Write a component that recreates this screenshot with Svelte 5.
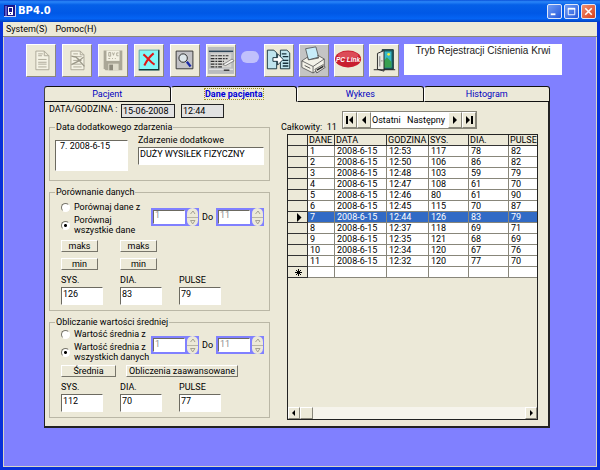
<script lang="ts">
  type Reading = { no: number; time: string; sys: number; dia: number; pulse: number };

  const tabs = ['Pacjent', 'Dane pacjenta', 'Wykres', 'Histogram'];
  const date = '2008-6-15';

  const readings: Reading[] = [
    { no: 1, time: '12:53', sys: 117, dia: 78, pulse: 82 },
    { no: 2, time: '12:50', sys: 106, dia: 86, pulse: 82 },
    { no: 3, time: '12:48', sys: 103, dia: 59, pulse: 79 },
    { no: 4, time: '12:47', sys: 108, dia: 61, pulse: 70 },
    { no: 5, time: '12:46', sys: 80, dia: 61, pulse: 90 },
    { no: 6, time: '12:45', sys: 115, dia: 70, pulse: 87 },
    { no: 7, time: '12:44', sys: 126, dia: 83, pulse: 79 },
    { no: 8, time: '12:37', sys: 118, dia: 69, pulse: 71 },
    { no: 9, time: '12:35', sys: 121, dia: 68, pulse: 69 },
    { no: 10, time: '12:34', sys: 120, dia: 67, pulse: 76 },
    { no: 11, time: '12:32', sys: 120, dia: 77, pulse: 70 }
  ];

  let activeTab = $state('Dane pacjenta');
  let selected = $state(7);
  let compareMode = $state('all');
  let averageMode = $state('all');

  function step(by: number) {
    selected = Math.min(readings.length, Math.max(1, selected + by));
  }
</script>

{#snippet spinner(label: string, value: string)}
  <span class="spinner">
    <input type="text" aria-label={label} {value} disabled />
    <span class="arrows">
      <button aria-label="Więcej" disabled><svg viewBox="0 0 11 9"><path d="M3.500 6 6 3l2 3" /></svg></button>
      <button aria-label="Mniej" disabled><svg viewBox="0 0 11 9"><path d="M3.500 2.500h4.500L5.700 6z" /></svg></button>
    </span>
  </span>
{/snippet}

{#snippet results(sys: string, dia: string, pulse: string)}
  <div class="results">
    <label>SYS.<input type="text" value={sys} /></label>
    <label>DIA.<input type="text" value={dia} /></label>
    <label>PULSE<input type="text" value={pulse} /></label>
  </div>
{/snippet}

<div class="window">
  <header class="titlebar">
    <svg class="logo" viewBox="0 0 12 12">
      <rect width="12" height="12" fill="#16168c" />
      <rect x="1" y="1" width="2" height="10" fill="#5a5ac8" />
      <rect x="4" y="2" width="5" height="8" fill="#fff" />
      <path d="M5 3h3v4H5zM6 8h1v1H6z" fill="#16168c" />
      <path d="M11.500 0v12M0 11.500h12" stroke="#c8d0f0" />
    </svg>
    <h1>BP4.0</h1>
    <button class="ctl" aria-label="Minimalizuj"><svg viewBox="0 0 14 14"><path d="M3 10h5" stroke-width="2" /></svg></button>
    <button class="ctl" aria-label="Maksymalizuj"><svg viewBox="0 0 14 14"><path d="M3.500 4v6.500h7V4" /><path d="M3 4h8" stroke-width="2" /></svg></button>
    <button class="ctl close" aria-label="Zamknij"><svg viewBox="0 0 14 14"><path d="m3.500 3.500 7 7m0-7-7 7" stroke-width="1.700" /></svg></button>
  </header>

  <nav class="menu">
    <button>System(S)</button>
    <button>Pomoc(H)</button>
  </nav>

  <main>
    <div class="toolbar">
      <div class="tools">
        <button class="tool" aria-label="Raport" disabled>
          <svg viewBox="0 0 30 33" fill="none" stroke="#aaa797">
            <path d="M9.500 6.500h9l5 5v15h-14zM18.500 6.500v5h5" fill="#f4f2e4" />
            <path d="M12 9.500h5M12 11.500h4M12 15.500h9M12 18.500h9M12 20.500h9M12 23.500h9" />
          </svg>
        </button>
        <button class="tool" aria-label="Usuń raport" disabled>
          <svg viewBox="0 0 30 33" fill="none" stroke="#aaa797">
            <path d="M8.500 6.500h10l4 4v16h-14zM18.500 6.500v4h4" fill="#f4f2e4" />
            <path d="M11 9.500h5M11 12.500h9M11 16.500h9M11 20.500h9M11 23.500h9" />
            <path d="m9 12 5 1 9 10M22 13l-5 4-8 4M14 13l5 4" stroke="#999686" stroke-width="1.300" />
          </svg>
        </button>
        <button class="tool" aria-label="Zapisz" disabled>
          <svg viewBox="0 0 30 33">
            <path d="M5 6h20v21H7l-2-2z" fill="#aaa797" />
            <path d="M8 6h14v11H8z" fill="#f4f2e4" />
            <path d="M10.500 8v4h2V8zM14.500 8l1 3 1-3M21 8.500h-2v3h2M10 14.500h2M14 14.500h1M17 14.500h1" fill="none" stroke="#aaa797" />
            <path d="M10 20h11v7H10z" fill="#dedbcb" />
            <path d="M11 21h4v6h-4z" fill="#8c897b" />
          </svg>
        </button>
        <button class="tool" aria-label="Usuń">
          <svg viewBox="0 0 30 33">
            <path d="M4 5h21v22H4z" fill="#80f8f8" />
            <path d="M4 26.500h21.500V5" fill="none" stroke="#103838" stroke-width="1.500" />
            <path d="M4.500 26V5.500H25" fill="none" stroke="#7c9a98" />
            <path d="M9 10c4 3 7 8 12 11M20 9c-4 3-7 7-10 13" fill="none" stroke="#e01818" stroke-width="2.200" />
          </svg>
        </button>
        <button class="tool" aria-label="Szukaj">
          <svg viewBox="0 0 30 33">
            <path d="M5.500 6.500h18v19h-18z" fill="#c2c2c6" stroke="#333" />
            <circle cx="13" cy="14" r="4.500" fill="#dde6ea" stroke="#222" />
            <path d="m17 18 4 5" stroke="#1a2aa8" stroke-width="2.500" />
          </svg>
        </button>
        <button class="tool" aria-label="Notatki">
          <svg viewBox="0 0 30 33">
            <path d="M1 2h28v29H1z" fill="#b9bcbe" />
            <path d="M2 6h26v1.500H2z" fill="#2d4658" />
            <path d="M4 9h22v15H4z" fill="#d6d6d2" />
            <path d="M4 11.500h19M4 14.500h18M4 17.500h14M4 20.500h14M4 23.500h12" stroke="#2c2c2c" stroke-width="1.300" stroke-dasharray="4 1 2 1" />
            <path d="m17 21 10-6 2 2-9 5z" fill="#f6f6f4" stroke="#444" stroke-width=".6" />
            <path d="M2 26h26" stroke="#eee" /><path d="M18 27h6" stroke="#333" stroke-width="1.500" />
          </svg>
        </button>
      </div>
      <span class="pill"></span>
      <button class="tool" aria-label="Przenieś dane">
        <svg viewBox="0 0 30 33" stroke="#16303c">
          <path d="M2.500 5.500h7l3 3v17h-10z" fill="#bfe4ee" />
          <path d="M16.500 5.500h7l3 3v17h-10z" fill="#bfe4ee" />
          <path d="M18 9.500h5M19 12.500h6M19 16.500h6M19 19.500h6M19 22.500h6" stroke-width="1.500" />
          <path d="M8.500 13.500h5v-4l6 6-6 6v-4h-5z" fill="#fff" />
        </svg>
      </button>
      <button class="tool grey" aria-label="Drukuj">
        <svg viewBox="0 0 30 33" stroke="#444" stroke-width=".8">
          <path d="m6 4 11-2 3 11-11 3z" fill="#c8ecf8" />
          <path d="m2 17 6-4 1 3 11-2-1-3 7 4v7l-12 8-12-6z" fill="#f4f2e8" />
          <path d="m2 17 12 6 12-8M14 23v7" fill="none" />
          <path d="m16 26 9-5 2 3-9 6z" fill="#e4e2d8" /><path d="m18 27 7-4" stroke="#222" stroke-width="1.500" />
          <path d="m5 22 6 3" stroke="#222" />
        </svg>
      </button>
      <button class="tool" aria-label="PC Link">
        <svg viewBox="0 0 30 33">
          <ellipse cx="14" cy="15" rx="14" ry="9" fill="#c81e30" />
          <ellipse cx="14" cy="11" rx="11" ry="4" fill="#dc4c58" />
          <text x="14" y="18" text-anchor="middle" font-size="7" font-weight="700" font-style="italic" fill="#fff">PC Link</text>
        </svg>
      </button>
      <button class="tool" aria-label="Wyjście">
        <svg viewBox="0 0 30 33">
          <path d="M13 5h12v21H13z" fill="#1f5e64" stroke="#102c30" />
          <path d="M15 7h8v17h-8z" fill="#34b8c8" />
          <path d="m15 17 3-4 5 5v6h-8z" fill="#38a050" />
          <circle cx="20" cy="10" r="1.500" fill="#f4ec40" />
          <path d="m8 9 7-3v22l-7-2z" fill="#e8e8e0" stroke="#222" />
          <path d="M4 26.500h23" stroke="#222" /><path d="M10.500 12v11M12 17h1.500" stroke="#777" />
        </svg>
      </button>
      <div class="mode">Tryb Rejestracji Ciśnienia Krwi</div>
    </div>

    <section class="panel">
      <div class="tabs" role="tablist">
        {#each tabs as tab}
          <button role="tab" class="tab" class:active={tab === activeTab} aria-selected={tab === activeTab} onclick={() => (activeTab = tab)}>
            <span>{tab}</span>
          </button>
        {/each}
      </div>

      <div class="body">
        <div class="left">
          <div class="stamp">
            <label for="stamp-date">DATA/GODZINA :</label>
            <input id="stamp-date" class="date" type="text" value="15-06-2008" readonly />
            <input class="hour" type="text" aria-label="Godzina" value="12:44" readonly />
          </div>

          <fieldset class="event">
            <legend>Data dodatkowego zdarzenia</legend>
            <select size="2" aria-label="Data dodatkowego zdarzenia">
              <option>7. 2008-6-15</option>
            </select>
            <label>Zdarzenie dodatkowe<input type="text" value="DUŻY WYSIŁEK FIZYCZNY" /></label>
          </fieldset>

          <fieldset class="compare">
            <legend>Porównanie danych</legend>
            <div class="range">
              <div class="radios">
                <label><input type="radio" value="range" bind:group={compareMode} />Porównaj dane z</label>
                <label><input type="radio" value="all" bind:group={compareMode} />Porównaj<br />wszystkie dane</label>
              </div>
              {@render spinner('Od', '1')}
              <span class="to">Do</span>
              {@render spinner('Do', '11')}
            </div>
            <div class="extremes">
              <button>maks</button>
              <button>maks</button>
              <button>min</button>
              <button>min</button>
            </div>
            {@render results('126', '83', '79')}
          </fieldset>

          <fieldset class="average">
            <legend>Obliczanie wartości średniej</legend>
            <div class="range">
              <div class="radios">
                <label><input type="radio" value="range" bind:group={averageMode} />Wartość średnia z</label>
                <label><input type="radio" value="all" bind:group={averageMode} />Wartość średnia z<br />wszystkich danych</label>
              </div>
              {@render spinner('Od', '1')}
              <span class="to">Do</span>
              {@render spinner('Do', '11')}
            </div>
            <div class="calc">
              <button>Średnia</button>
              <button>Obliczenia zaawansowane</button>
            </div>
            {@render results('112', '70', '77')}
          </fieldset>
        </div>

        <div class="right">
          <div class="records">
            <span class="total">Całkowity:&nbsp; {readings.length}</span>
            <div class="pager">
              <button aria-label="Pierwszy" onclick={() => (selected = 1)}><svg viewBox="0 0 12 14"><path d="M2 3h2v8H2zM9 3v8L5 7z" /></svg></button>
              <button aria-label="Wstecz" onclick={() => step(-1)}><svg viewBox="0 0 12 14"><path d="M8 3v8L4 7z" /></svg></button>
              <span class="caption"><span>Ostatni</span><span>Następny</span></span>
              <button aria-label="Dalej" onclick={() => step(1)}><svg viewBox="0 0 12 14"><path d="M4 3v8l4-4z" /></svg></button>
              <button aria-label="Ostatni rekord" onclick={() => (selected = readings.length)}><svg viewBox="0 0 12 14"><path d="M3 3v8l4-4zM8 3h2v8H8z" /></svg></button>
            </div>
          </div>

          <div class="grid">
            <table>
              <colgroup>
                <col class="c-mark" /><col class="c-no" /><col class="c-date" /><col class="c-time" />
                <col class="c-val" /><col class="c-val" /><col />
              </colgroup>
              <thead>
                <tr><th></th><th>DANE</th><th>DATA</th><th>GODZINA</th><th>SYS.</th><th>DIA.</th><th>PULSE</th></tr>
              </thead>
              <tbody>
                {#each readings as r}
                  <tr class:selected={r.no === selected} onclick={() => (selected = r.no)}>
                    <th>{#if r.no === selected}<svg viewBox="0 0 7 9"><path d="M2 0v9l4.500-4.500z" /></svg>{/if}</th>
                    <td>{r.no}</td>
                    <td>{date}</td>
                    <td>{r.time}</td>
                    <td>{r.sys}</td>
                    <td>{r.dia}</td>
                    <td>{r.pulse}</td>
                  </tr>
                {/each}
                <tr>
                  <th><svg viewBox="0 0 7 9" stroke="#000"><path d="M3.500 1v7M0 4.500h7M1 2l5 5M6 2 1 7" /></svg></th>
                  <td></td><td></td><td></td><td></td><td></td><td></td>
                </tr>
              </tbody>
            </table>
            <div class="scrollbar">
              <button aria-label="W lewo"><svg viewBox="0 0 8 8"><path d="M5 1v6L2 4z" /></svg></button>
              <span class="thumb"></span>
              <button class="end" aria-label="W prawo"><svg viewBox="0 0 8 8"><path d="M3 1v6l3-3z" /></svg></button>
            </div>
          </div>
        </div>
      </div>
    </section>
  </main>
</div>

<style>
  :global(body) {
    background: #0a3fd8;
  }

  .window {
    display: flex;
    flex-direction: column;
    box-sizing: border-box;
    min-height: 100vh;
    border: 3px solid #0831d9;
    border-top: 0;
    background: #ece9d8;
    color: #000;
    font: 9px/10px Roboto, "Liberation Sans", Arial, sans-serif;
  }

  button,
  input,
  select {
    box-sizing: border-box;
    margin: 0;
    padding: 0;
    border: 0;
    border-radius: 0;
    background: none;
    color: inherit;
    font: inherit;
  }

  svg {
    display: block;
  }

  .titlebar {
    display: flex;
    align-items: center;
    gap: 2px;
    height: 22px;
    margin: 0 -3px;
    padding: 0 4px;
    box-sizing: border-box;
    background: linear-gradient(#0a50d8, #2a86f8 8%, #0560e8 22%, #0058e6 60%, #0564f4 85%, #0040c0);
  }

  .logo {
    width: 12px;
    height: 12px;
  }

  h1 {
    flex: 1;
    margin: 0;
    color: #fff;
    font: bold 10px/12px "DejaVu Sans", sans-serif;
  }

  .ctl {
    width: 15px;
    height: 15px;
    border: 1px solid #dfe8fa;
    border-radius: 2px;
    background: linear-gradient(135deg, #6f9cf4, #2458dc);
  }

  .ctl.close {
    background: linear-gradient(135deg, #f09070, #d8401c);
  }

  .ctl path {
    fill: none;
    stroke: #fff;
  }

  .menu {
    display: flex;
    gap: 8px;
    height: 14px;
    padding-left: 3px;
    border-bottom: 1px solid #8a8878;
  }

  main {
    display: flex;
    flex: 1;
    flex-direction: column;
    padding: 7px 34px 38px 22px;
    border: 1px solid #d8d4c4;
    border-top: 0;
    background: #8080ff;
  }

  .toolbar,
  .tools {
    display: flex;
    gap: 5px;
  }

  .tools {
    gap: 6px;
  }

  .tool {
    width: 30px;
    height: 33px;
    flex-shrink: 0;
    border: 1px solid;
    border-color: #fff #8c897b #8c897b #fff;
    background: #ece9d8;
  }

  .tool.grey {
    background: #c4c4c4;
  }

  .tool text {
    font-family: "Liberation Sans", sans-serif;
  }

  .pill {
    width: 18px;
    height: 12px;
    flex-shrink: 0;
    margin: 7px 0 0;
    border-radius: 6px;
    background: #c0c0fc;
  }

  .mode {
    flex: 1;
    height: 31px;
    background: #fff;
    color: #222;
    font-family: "Liberation Sans", Arial, sans-serif;
    font-size: 10px;
    line-height: 14px;
    text-align: center;
  }

  .panel {
    display: flex;
    flex: 1;
    flex-direction: column;
    margin: 9px 12px 0 18px;
  }

  .tabs {
    display: grid;
    grid-template-columns: repeat(4, 1fr);
  }

  .tab {
    height: 16px;
    border: 1px solid #111;
    border-left-color: #fff;
    border-radius: 3px 3px 0 0;
    background: #ece9d8;
    color: #0000c0;
  }

  .tab:first-child {
    border-left-color: #444;
  }

  .tab.active {
    border-bottom-color: #ece9d8;
    color: #0000d8;
    font-weight: bold;
  }

  .tab.active span {
    outline: 1px dotted #a09020;
  }

  .body {
    display: flex;
    flex: 1;
    padding: 2px 10px 6px 4px;
    border: 1px solid #222;
    border-width: 0 2px 2px 1px;
    background: #ece9d8;
  }

  .left {
    width: 221px;
    flex-shrink: 0;
  }

  .stamp {
    display: flex;
    gap: 6px;
    height: 14px;
    margin-bottom: 3px;
  }

  .stamp label {
    width: 66px;
    white-space: nowrap;
  }

  input[type="text"] {
    padding: 0 1px;
    border: 1px solid;
    border-color: #6c6a60 #fff #fff #6c6a60;
    background: #fff;
  }

  .stamp input[type="text"] {
    border-color: #222;
    background: #e2e2e2;
  }

  .date {
    width: 54px;
  }

  .hour {
    width: 43px;
  }

  fieldset {
    box-sizing: border-box;
    margin: 0 0 5px;
    padding: 0 5px 5px 11px;
    border: 1px solid #bab7a6;
  }

  fieldset:last-child {
    margin-bottom: 0;
  }

  legend {
    height: 12px;
    margin-left: -6px;
    padding: 0 1px;
    line-height: 12px;
  }

  .event {
    display: grid;
    grid-template-columns: 73px 1fr;
    gap: 10px;
    height: 60px;
    padding-left: 5px;
  }

  .event legend {
    margin-left: 0;
  }

  .event select {
    height: 31px;
    margin-top: 7px;
    overflow: hidden;
    border: 1px solid;
    border-color: #6c6a60 #fff #fff #6c6a60;
    background: #fff;
  }

  .event option {
    min-height: 10px;
    padding: 0 4px;
  }

  .event label {
    padding-top: 2px;
  }

  .event input {
    display: block;
    width: 100%;
    height: 18px;
    margin-top: 2px;
    padding-bottom: 5px;
  }

  .range {
    display: flex;
    align-items: center;
  }

  .radios {
    display: grid;
    gap: 3px;
    width: 90px;
    padding-top: 4px;
  }

  .average .radios {
    padding-top: 1px;
  }

  .radios label {
    display: flex;
    align-items: center;
    gap: 4px;
    white-space: nowrap;
  }

  .radios input {
    appearance: none;
    width: 9px;
    height: 9px;
    flex-shrink: 0;
    border: 1px solid;
    border-color: #77756a #fff #fff #77756a;
    border-radius: 50%;
    background: #fff;
  }

  .radios input:checked {
    background: radial-gradient(circle, #000 1px, #fff 2px);
  }

  .to {
    width: 17px;
    text-align: center;
  }

  .spinner {
    display: flex;
    box-sizing: border-box;
    width: 48px;
    height: 18px;
    padding: 2px 1px 2px 2px;
    background: #8080ff;
  }

  .spinner input[type="text"] {
    width: 32px;
    padding-bottom: 3px;
    color: #909090;
  }

  .arrows {
    display: grid;
    width: 11px;
    height: 18px;
    margin: -2px 0 0 2px;
    overflow: hidden;
    border-radius: 6px;
    background: #ece9d8;
  }

  .arrows button + button {
    border-top: 1px solid #b8b5a5;
  }

  .arrows path {
    fill: none;
    stroke: #a4a192;
  }

  .extremes {
    display: grid;
    grid-template-columns: 37px 37px;
    gap: 6px 22px;
    margin: 5px 0;
  }

  .calc {
    display: flex;
    gap: 10px;
    margin: 3px 0 5px;
  }

  .extremes button,
  .calc button {
    height: 12px;
    border: 1px solid;
    border-color: #fff #77756a #77756a #fff;
    white-space: nowrap;
  }

  .calc button:first-child {
    width: 55px;
  }

  .calc button:last-child {
    width: 112px;
  }

  .results {
    display: grid;
    grid-template-columns: 42px 42px 42px;
    gap: 17px;
  }

  .results input {
    display: block;
    width: 100%;
    height: 18px;
    margin-top: 2px;
    padding-bottom: 4px;
  }

  .right {
    display: flex;
    flex: 1;
    flex-direction: column;
    min-width: 0;
    padding: 7px 0 0 11px;
  }

  .records {
    display: flex;
    height: 23px;
    gap: 10px;
  }

  .total {
    width: 51px;
    padding-top: 11px;
    white-space: nowrap;
  }

  .pager {
    display: flex;
    box-sizing: border-box;
    width: 135px;
    height: 18px;
    border: 1px solid #88867a;
  }

  .pager button {
    width: 14px;
    border: 1px solid;
    border-color: #fff #88867a #88867a #fff;
  }

  .caption {
    display: flex;
    flex: 1;
    justify-content: space-between;
    padding: 0 3px 0 1px;
    background: #fff;
    line-height: 16px;
  }

  .grid {
    display: flex;
    flex: 1;
    flex-direction: column;
    justify-content: space-between;
    margin-left: 6px;
    border: 1px solid #222;
  }

  table {
    width: 100%;
    border-collapse: separate;
    border-spacing: 0;
    table-layout: fixed;
  }

  .c-mark { width: 20px; }
  .c-no { width: 27px; }
  .c-date { width: 52px; }
  .c-time { width: 42px; }
  .c-val { width: 40px; }

  th,
  td {
    box-sizing: border-box;
    height: 11px;
    padding: 0 0 0 2px;
    overflow: hidden;
    border: 1px solid #88867a;
    border-width: 0 1px 1px 0;
    font-weight: normal;
    text-align: left;
    white-space: nowrap;
  }

  th {
    padding-left: 1px;
    border-color: #333;
    background: #ece9d8;
  }

  td {
    background: #fff;
  }

  th:last-child,
  td:last-child {
    border-right: 0;
  }

  .selected td {
    background: #316ac5;
    color: #fff;
  }

  th svg {
    width: 7px;
    height: 9px;
    margin-left: 6px;
  }

  .scrollbar {
    display: flex;
    height: 12px;
    background: #f6f4ec;
  }

  .scrollbar button {
    width: 12px;
    padding: 1px;
    border: 1px solid;
    border-color: #fff #88867a #88867a #fff;
    background: #ece9d8;
  }

  .thumb {
    width: 13px;
    box-sizing: border-box;
    border: 1px solid;
    border-color: #fff #88867a #88867a #fff;
    background: #ece9d8;
  }

  .scrollbar .end {
    margin-left: auto;
  }
</style>
